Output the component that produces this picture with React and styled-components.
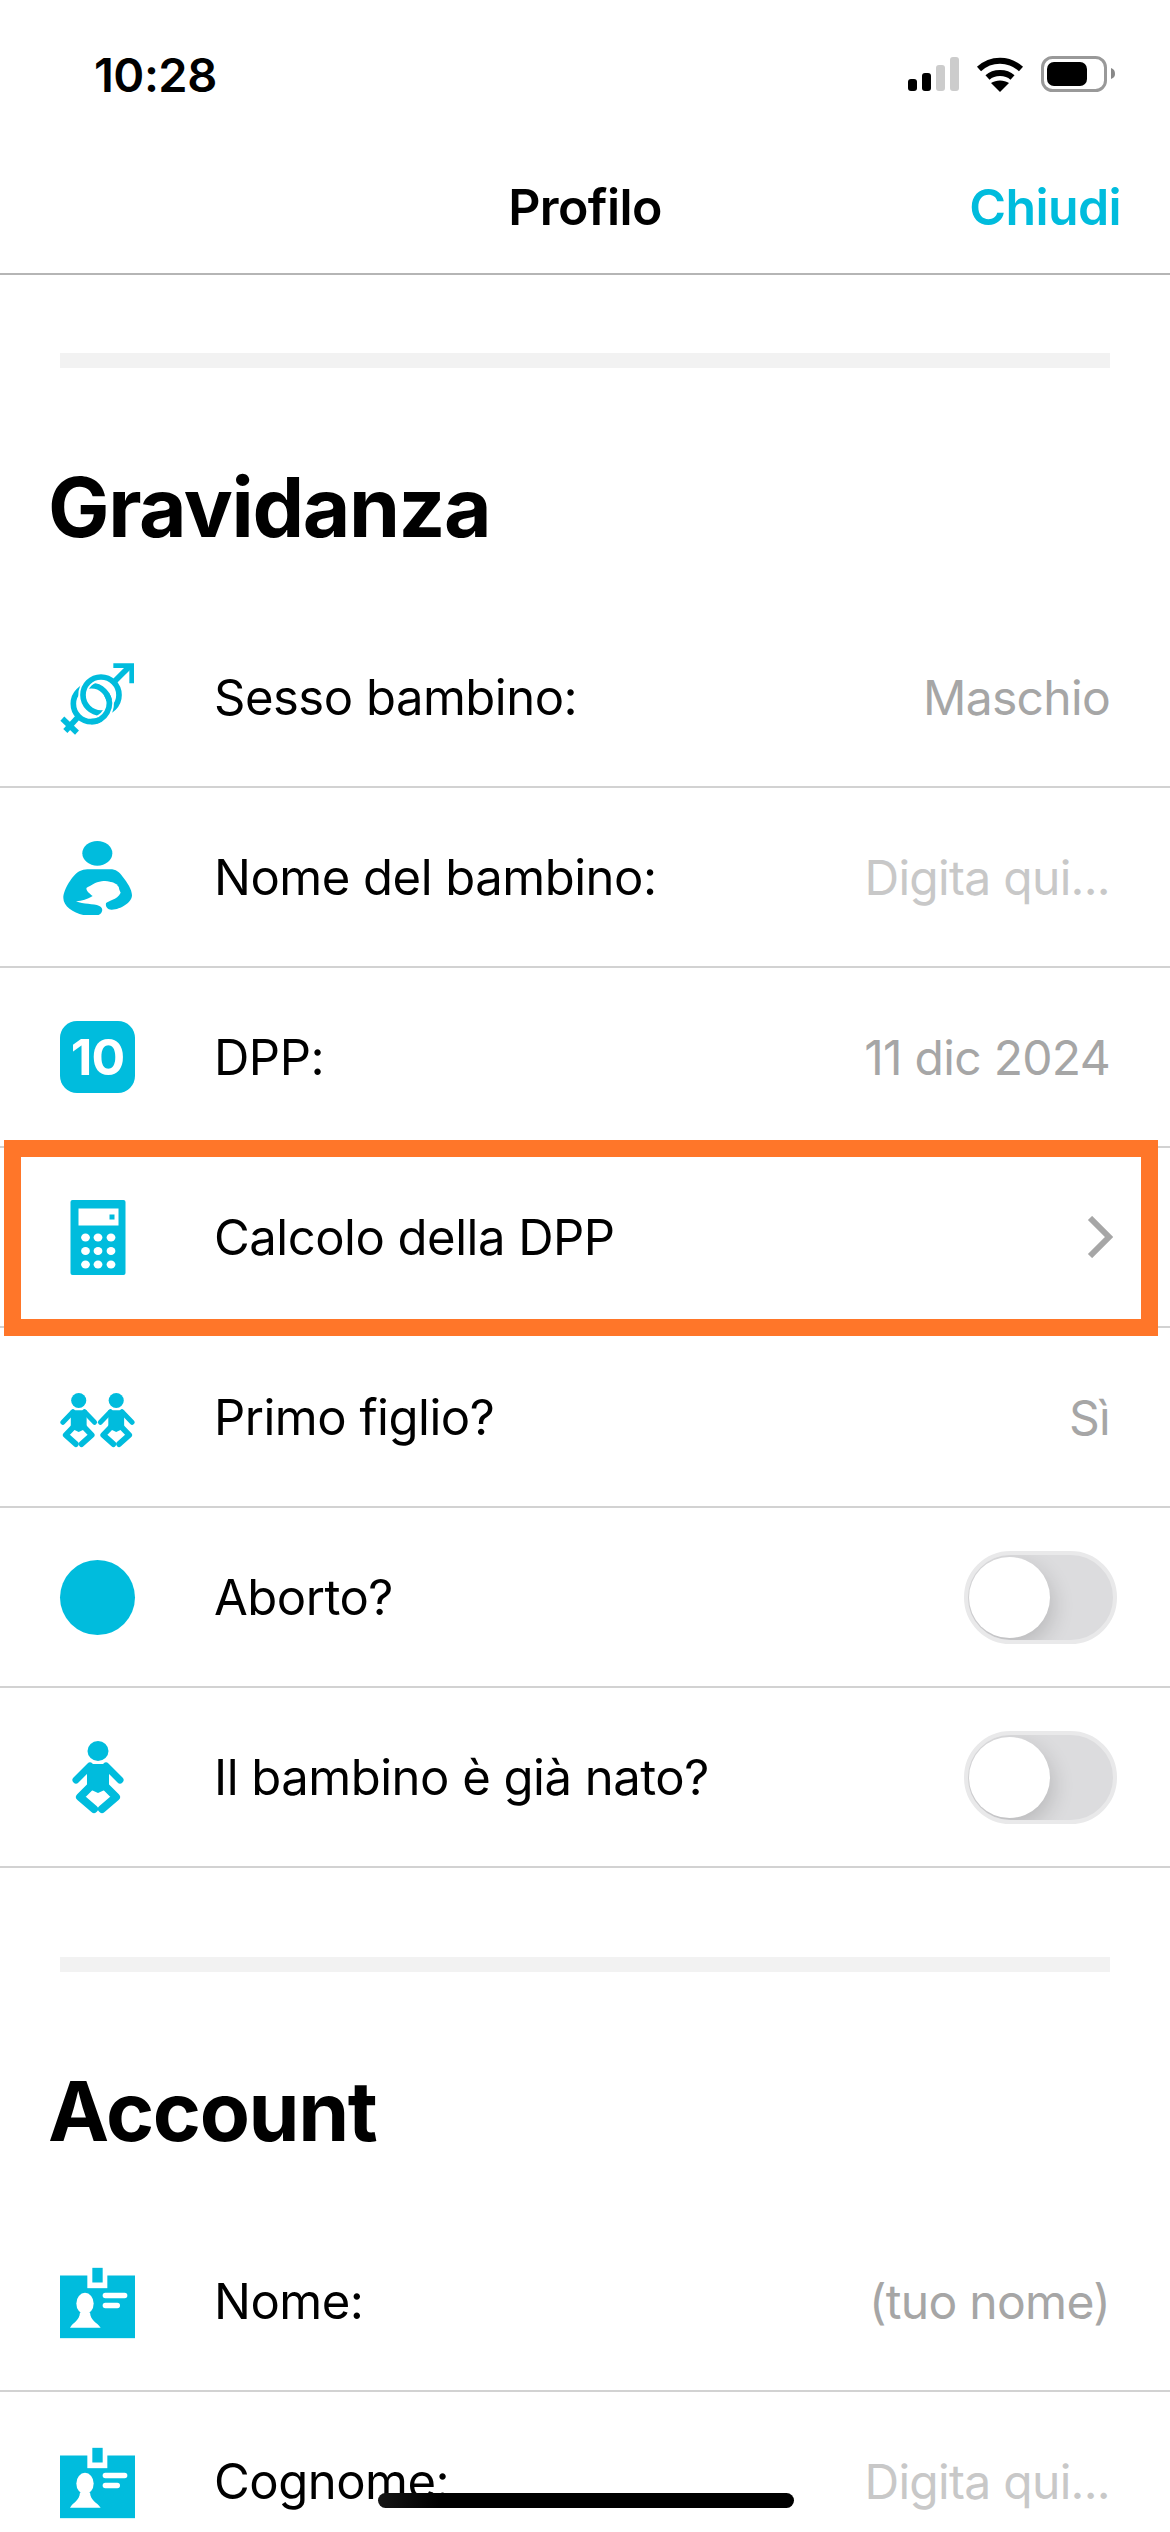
import React from 'react';
import styled, { createGlobalStyle } from 'styled-components';

const TEAL = '#00bcdd';

const GlobalStyle = createGlobalStyle`
  html, body {
    margin: 0;
    padding: 0;
    background: #fff;
    font-family: Inter, "Liberation Sans", sans-serif;
  }
`;

const Page = styled.div`
  position: relative;
  width: 1170px;
  height: 2532px;
  overflow: hidden;
  background: #fff;
`;

const StatusBar = styled.div`
  height: 148px;
  padding: 0 55px 0 94px;
  box-sizing: border-box;
  display: flex;
  align-items: center;
  justify-content: space-between;
`;

const Time = styled.span`
  font-size: 47px;
  font-weight: 600;
  letter-spacing: -0.5px;
  color: #000;
`;

const NavBar = styled.header`
  height: 127px;
  box-sizing: border-box;
  padding: 0 49px 7px;
  display: grid;
  grid-template-columns: 1fr auto 1fr;
  align-items: center;
  border-bottom: 2px solid #b5b5b5;
`;

const NavTitle = styled.h1`
  grid-column: 2;
  margin: 0;
  font-size: 50px;
  font-weight: 600;
  letter-spacing: -0.6px;
  color: #000;
`;

const NavAction = styled.span`
  justify-self: end;
  font-size: 50px;
  font-weight: 600;
  letter-spacing: -0.6px;
  color: ${TEAL};
`;

const Band = styled.div`
  height: 15px;
  margin: ${(p) => p.$top}px 60px 0;
  background: #f2f2f2;
`;

const SectionTitle = styled.h2`
  height: 240px;
  box-sizing: border-box;
  margin: 0;
  padding: 90px 0 0 48px;
  font-size: 82px;
  line-height: 100px;
  font-weight: 700;
  letter-spacing: -1.4px;
  color: #000;
`;

const Row = styled.div`
  position: relative;
  height: 180px;
  box-sizing: border-box;
  display: flex;
  align-items: center;
  padding: 0 60px 0 60px;
  border-bottom: 2px solid #d2d2d2;
`;

const IconSlot = styled.div`
  flex: none;
  width: 75px;
  height: 75px;
  display: flex;
  align-items: center;
  justify-content: center;
`;

const Label = styled.span`
  flex: 1;
  margin-left: 79px;
  font-size: 49px;
  letter-spacing: -0.5px;
  color: #000;
`;

const Value = styled.span`
  font-size: 48px;
  letter-spacing: -0.7px;
  color: ${(p) => (p.$placeholder ? '#c8c8c8' : '#a6a6a6')};
`;

const DayBadge = styled.div`
  width: 75px;
  height: 72px;
  border-radius: 17px;
  background: ${TEAL};
  color: #fff;
  font-size: 50px;
  font-weight: 700;
  letter-spacing: -1px;
  display: flex;
  align-items: center;
  justify-content: center;
`;

const Dot = styled.div`
  width: 75px;
  height: 75px;
  border-radius: 50%;
  background: ${TEAL};
`;

const Toggle = styled.div`
  width: 153px;
  height: 93px;
  box-sizing: border-box;
  margin-right: -7px;
  padding-left: 1px;
  display: flex;
  align-items: center;
  border: 4px solid #e9e9ea;
  border-radius: 47px;
  background: #dcdcde;
  overflow: hidden;
`;

const Knob = styled.div`
  width: 81px;
  height: 81px;
  border-radius: 50%;
  background: #fff;
  box-shadow: 3px 8px 22px rgba(0, 0, 0, 0.16);
`;

const Highlight = styled.div`
  position: absolute;
  top: -8px;
  bottom: -10px;
  left: 4px;
  right: 12px;
  border: 17px solid #ff7629;
  pointer-events: none;
`;

const HomeBar = styled.div`
  position: absolute;
  left: 378px;
  bottom: 24px;
  width: 416px;
  height: 15px;
  border-radius: 8px;
  background: linear-gradient(90deg, #161616, #000 15%);
`;

const Icon = ({ box = '0 0 75 75', children }) => (
  <svg width="75" height="75" viewBox={box} fill={TEAL}>
    {children}
  </svg>
);

const SignalIcon = () => (
  <svg width="51" height="34" viewBox="0 0 51 34">
    <rect x="0" y="22" width="9" height="12" rx="3" fill="#000" />
    <rect x="14" y="16" width="9" height="18" rx="3" fill="#000" />
    <rect x="28" y="8" width="9" height="26" rx="3" fill="#ccc" />
    <rect x="42" y="0" width="9" height="34" rx="3" fill="#ccc" />
  </svg>
);

const WifiIcon = () => (
  <svg width="48" height="36" viewBox="0 0 48 36" fill="none" stroke="#000" strokeWidth="6">
    <path d="M3 13 C15 2 33 2 45 13" />
    <path d="M11.5 21.5 C18 15.5 30 15.5 36.5 21.5" />
    <path d="M24 36 L15 27 C20 23.5 28 23.5 33 27 Z" fill="#000" stroke="none" />
  </svg>
);

const BatteryIcon = () => (
  <svg width="74" height="36" viewBox="0 0 74 36">
    <rect x="1.5" y="1.5" width="63" height="33" rx="10" fill="none" stroke="#999" strokeWidth="3" />
    <rect x="6" y="6" width="40" height="24" rx="7" fill="#000" />
    <path d="M70 12 C73 13 74 15 74 18 C74 20 73 22 70 23 Z" fill="#888" />
  </svg>
);

const StatusIcons = styled.div`
  display: flex;
  align-items: center;
  gap: 17px;
`;

const GenderIcon = () => (
  <Icon box="90 62 225 225">
    <g fill="none" stroke={TEAL} strokeWidth="17">
      <circle cx="184" cy="193" r="54" />
      <circle cx="213" cy="167" r="54" stroke="#fff" strokeWidth="28" />
      <circle cx="213" cy="167" r="54" />
      <path d="M237 184 A54 54 0 0 1 207 242" stroke="#fff" strokeWidth="28" />
      <path d="M230 165 A54 54 0 0 1 184 247" />
      <path d="M251 129 L300 80" />
      <path d="M148 229 L106 275" />
      <path d="M97 238 L141 280" />
    </g>
    <path d="M250 72 H312 V132 H298 V86 H250 Z" />
  </Icon>
);

const NursingIcon = () => (
  <Icon box="90 602 225 225">
    <ellipse cx="202" cy="642" rx="45" ry="37" />
    <path d="M172 690 H240 C258 690 268 698 278 712 C292 730 306 750 306 768 C306 790 270 812 244 811 C232 811 226 802 228 792 C232 784 262 782 272 760 C260 732 240 722 215 726 C195 728 184 740 170 745 C166 752 178 762 188 770 C170 780 158 784 138 786 C160 796 190 792 208 800 C222 806 220 826 196 830 C160 834 100 812 100 776 C100 752 128 706 148 696 C156 692 164 690 172 690 Z" />
    <ellipse cx="238" cy="752" rx="30" ry="24" fill="#fff" />
  </Icon>
);

const Calculator = () => (
  <Icon>
    <rect x="10.5" y="0" width="55" height="75" rx="2" />
    <rect x="18.5" y="8.5" width="40" height="17" fill="#fff" />
    <rect x="49.5" y="14.5" width="5" height="5" />
    {[37.5, 51, 64.5].map((y) =>
      [25.5, 38, 51].map((x) => <ellipse key={`${x}-${y}`} cx={x} cy={y} rx="4.4" ry="4" fill="#fff" />)
    )}
  </Icon>
);

// one baby drawn in a 52x73 box, reused for the twins
const Baby = ({ transform }) => (
  <g transform={transform}>
    <ellipse cx="26" cy="10" rx="10.5" ry="10" />
    <path d="M15 23 H37 L37 47 L26 52 L15 47 Z" />
    <g fill="none" stroke={TEAL} strokeLinecap="round" strokeLinejoin="round">
      <path d="M18 25 L4 39" strokeWidth="7" />
      <path d="M34 25 L48 39" strokeWidth="7" />
      <path d="M18 46 L8 56 L22 68" strokeWidth="8" />
      <path d="M34 46 L44 56 L30 68" strokeWidth="8" />
    </g>
  </g>
);

const TwinsIcon = () => (
  <Icon>
    <Baby transform="translate(0 13) scale(0.72 0.75)" />
    <Baby transform="translate(37.5 13) scale(0.72 0.75)" />
  </Icon>
);

const BabyIcon = () => (
  <Icon>
    <Baby transform="translate(12 1)" />
  </Icon>
);

const BadgeIcon = () => (
  <Icon box="90 76.5 225 225">
    <rect x="90" y="111" width="225" height="188" />
    <rect x="172" y="100" width="60" height="49" fill="#fff" />
    <rect x="187" y="88" width="31" height="44" />
    <ellipse cx="165" cy="195" rx="26" ry="32" fill="#fff" />
    <path d="M150 222 H180 C182 248 200 250 212 268 H120 C130 250 148 248 150 222 Z" fill="#fff" />
    <rect x="218" y="163" width="74" height="16" rx="8" fill="#fff" />
    <rect x="218" y="193" width="52" height="16" rx="8" fill="#fff" />
  </Icon>
);

const ChevronIcon = styled.svg`
  margin-right: -3px;
`;

const Chevron = () => (
  <ChevronIcon width="26" height="42" viewBox="0 0 26 42" fill="none" stroke="#a6a6a6" strokeWidth="6">
    <path d="M3 2 L22 21 L3 40" />
  </ChevronIcon>
);

const pregnancyRows = [
  { icon: <GenderIcon />, label: 'Sesso bambino:', value: 'Maschio' },
  { icon: <NursingIcon />, label: 'Nome del bambino:', value: 'Digita qui...', placeholder: true },
  { icon: <DayBadge>10</DayBadge>, label: 'DPP:', value: '11 dic 2024' },
  { icon: <Calculator />, label: 'Calcolo della DPP', chevron: true, marked: true },
  { icon: <TwinsIcon />, label: 'Primo figlio?', value: 'Sì' },
  { icon: <Dot />, label: 'Aborto?', toggle: true },
  { icon: <BabyIcon />, label: 'Il bambino è già nato?', toggle: true },
];

const accountRows = [
  { icon: <BadgeIcon />, label: 'Nome:', value: '(tuo nome)' },
  { icon: <BadgeIcon />, label: 'Cognome:', value: 'Digita qui...', placeholder: true },
];

const ProfileRow = ({ icon, label, value, placeholder, chevron, toggle, marked }) => (
  <Row>
    <IconSlot>{icon}</IconSlot>
    <Label>{label}</Label>
    {value && <Value $placeholder={placeholder}>{value}</Value>}
    {chevron && <Chevron />}
    {toggle && (
      <Toggle>
        <Knob />
      </Toggle>
    )}
    {marked && <Highlight />}
  </Row>
);

const App = () => {
  return (
    <Page>
      <GlobalStyle />
      <StatusBar>
        <Time>10:28</Time>
        <StatusIcons>
          <SignalIcon />
          <WifiIcon />
          <BatteryIcon />
        </StatusIcons>
      </StatusBar>
      <NavBar>
        <NavTitle>Profilo</NavTitle>
        <NavAction>Chiudi</NavAction>
      </NavBar>
      <Band $top={78} />
      <SectionTitle>Gravidanza</SectionTitle>
      {pregnancyRows.map((row) => (
        <ProfileRow key={row.label} {...row} />
      ))}
      <Band $top={89} />
      <SectionTitle>Account</SectionTitle>
      {accountRows.map((row) => (
        <ProfileRow key={row.label} {...row} />
      ))}
      <HomeBar />
    </Page>
  );
};

export default App;
